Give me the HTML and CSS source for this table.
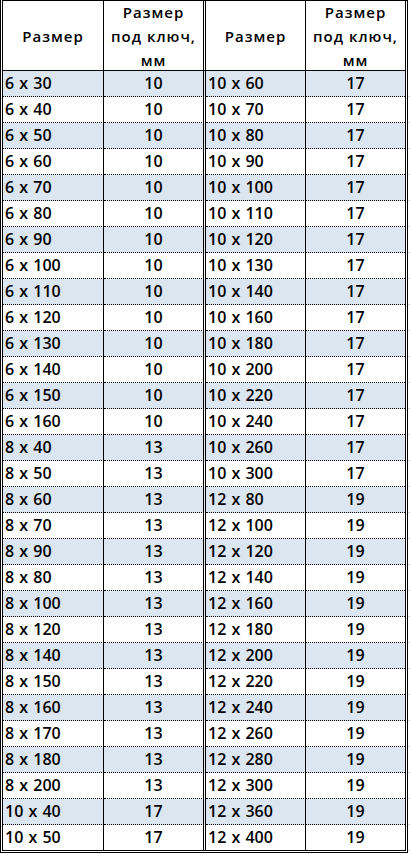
FILE: index.html
```
<!DOCTYPE html>
<html lang="ru">
<head>
<meta charset="utf-8">
<title>Размер под ключ</title>
<link rel="stylesheet" href="styles.css">
</head>
<body>
<table class="sheet">
<thead>
<tr>
<th class="c1"><div class="hd">Размер</div></th>
<th class="c2"><div class="hd">Размер<br>под ключ,<br>мм</div></th>
<th class="c3"><div class="hd">Размер</div></th>
<th class="c4"><div class="hd">Размер<br>под ключ,<br>мм</div></th>
</tr>
</thead>
<tbody>
<tr class="b"><td class="c1">6 x 30</td><td class="c2">10</td><td class="c3">10 x 60</td><td class="c4">17</td></tr>
<tr><td class="c1">6 x 40</td><td class="c2">10</td><td class="c3">10 x 70</td><td class="c4">17</td></tr>
<tr class="b"><td class="c1">6 x 50</td><td class="c2">10</td><td class="c3">10 x 80</td><td class="c4">17</td></tr>
<tr><td class="c1">6 x 60</td><td class="c2">10</td><td class="c3">10 x 90</td><td class="c4">17</td></tr>
<tr class="b"><td class="c1">6 x 70</td><td class="c2">10</td><td class="c3">10 x 100</td><td class="c4">17</td></tr>
<tr><td class="c1">6 x 80</td><td class="c2">10</td><td class="c3">10 x 110</td><td class="c4">17</td></tr>
<tr class="b"><td class="c1">6 x 90</td><td class="c2">10</td><td class="c3">10 x 120</td><td class="c4">17</td></tr>
<tr><td class="c1">6 x 100</td><td class="c2">10</td><td class="c3">10 x 130</td><td class="c4">17</td></tr>
<tr class="b"><td class="c1">6 x 110</td><td class="c2">10</td><td class="c3">10 x 140</td><td class="c4">17</td></tr>
<tr><td class="c1">6 x 120</td><td class="c2">10</td><td class="c3">10 x 160</td><td class="c4">17</td></tr>
<tr class="b"><td class="c1">6 x 130</td><td class="c2">10</td><td class="c3">10 x 180</td><td class="c4">17</td></tr>
<tr><td class="c1">6 x 140</td><td class="c2">10</td><td class="c3">10 x 200</td><td class="c4">17</td></tr>
<tr class="b"><td class="c1">6 x 150</td><td class="c2">10</td><td class="c3">10 x 220</td><td class="c4">17</td></tr>
<tr><td class="c1">6 x 160</td><td class="c2">10</td><td class="c3">10 x 240</td><td class="c4">17</td></tr>
<tr class="b"><td class="c1">8 x 40</td><td class="c2">13</td><td class="c3">10 x 260</td><td class="c4">17</td></tr>
<tr><td class="c1">8 x 50</td><td class="c2">13</td><td class="c3">10 x 300</td><td class="c4">17</td></tr>
<tr class="b"><td class="c1">8 x 60</td><td class="c2">13</td><td class="c3">12 x 80</td><td class="c4">19</td></tr>
<tr><td class="c1">8 x 70</td><td class="c2">13</td><td class="c3">12 x 100</td><td class="c4">19</td></tr>
<tr class="b"><td class="c1">8 x 90</td><td class="c2">13</td><td class="c3">12 x 120</td><td class="c4">19</td></tr>
<tr><td class="c1">8 x 80</td><td class="c2">13</td><td class="c3">12 x 140</td><td class="c4">19</td></tr>
<tr class="b"><td class="c1">8 x 100</td><td class="c2">13</td><td class="c3">12 x 160</td><td class="c4">19</td></tr>
<tr><td class="c1">8 x 120</td><td class="c2">13</td><td class="c3">12 x 180</td><td class="c4">19</td></tr>
<tr class="b"><td class="c1">8 x 140</td><td class="c2">13</td><td class="c3">12 x 200</td><td class="c4">19</td></tr>
<tr><td class="c1">8 x 150</td><td class="c2">13</td><td class="c3">12 x 220</td><td class="c4">19</td></tr>
<tr class="b"><td class="c1">8 x 160</td><td class="c2">13</td><td class="c3">12 x 240</td><td class="c4">19</td></tr>
<tr><td class="c1">8 x 170</td><td class="c2">13</td><td class="c3">12 x 260</td><td class="c4">19</td></tr>
<tr class="b"><td class="c1">8 x 180</td><td class="c2">13</td><td class="c3">12 x 280</td><td class="c4">19</td></tr>
<tr><td class="c1">8 x 200</td><td class="c2">13</td><td class="c3">12 x 300</td><td class="c4">19</td></tr>
<tr class="b"><td class="c1">10 x 40</td><td class="c2">17</td><td class="c3">12 x 360</td><td class="c4">19</td></tr>
<tr class="last"><td class="c1">10 x 50</td><td class="c2">17</td><td class="c3">12 x 400</td><td class="c4">19</td></tr>
</tbody>
</table>
</body>
</html>
```
FILE: styles.css
```
html {
  background: #fff;
}
body {
  margin: 0;
  background-image: repeating-linear-gradient(to bottom, transparent 0, transparent 25px, #d8d8d8 25px, #d8d8d8 26px);
  background-position: 0 71px;
  background-repeat: repeat-x;
  min-height: 855px;
  font-family: "Open Sans", "Liberation Sans", sans-serif;
  color: #000;
}
.sheet {
  border-collapse: separate;
  border-spacing: 0;
  table-layout: fixed;
  width: 408px;
  border-top: 1px solid #000;
  border-left: 3px double #000;
  border-right: 3px double #000;
  border-bottom: 3px double #000;
  background: #fff;
}
.sheet th {
  padding: 0;
  height: 69px;
  border-bottom: 1px solid #000;
  font-weight: 600;
  font-size: 15px;
  letter-spacing: 1px;
  line-height: 24px;
  text-align: center;
  vertical-align: middle;
}
.hd {
  height: 69px;
  display: flex;
  flex-direction: column;
  justify-content: center;
  align-items: center;
  white-space: nowrap;
}
.sheet th.c1 { width: 100px; }
.sheet th.c2 { width: 99px; }
.sheet th.c3 { width: 99px; }
.sheet th.c4 { width: 99px; }
.sheet .c1,
.sheet .c3 {
  border-right: 1px solid #000;
}
.sheet .c2 {
  border-right: 3px double #000;
}
.sheet td {
  height: 25px;
  padding: 0;
  border-bottom: 1px dotted #000;
  font-size: 16px;
  font-weight: 600;
  word-spacing: 1px;
  line-height: 25px;
  white-space: nowrap;
  vertical-align: middle;
}
.sheet td.c1,
.sheet td.c3 {
  padding-left: 2px;
  text-align: left;
}
.sheet td.c2,
.sheet td.c4 {
  text-align: center;
}
.sheet tr.b td {
  background: #dce6f1;
}
.sheet tr.last td {
  border-bottom: none;
}
```
